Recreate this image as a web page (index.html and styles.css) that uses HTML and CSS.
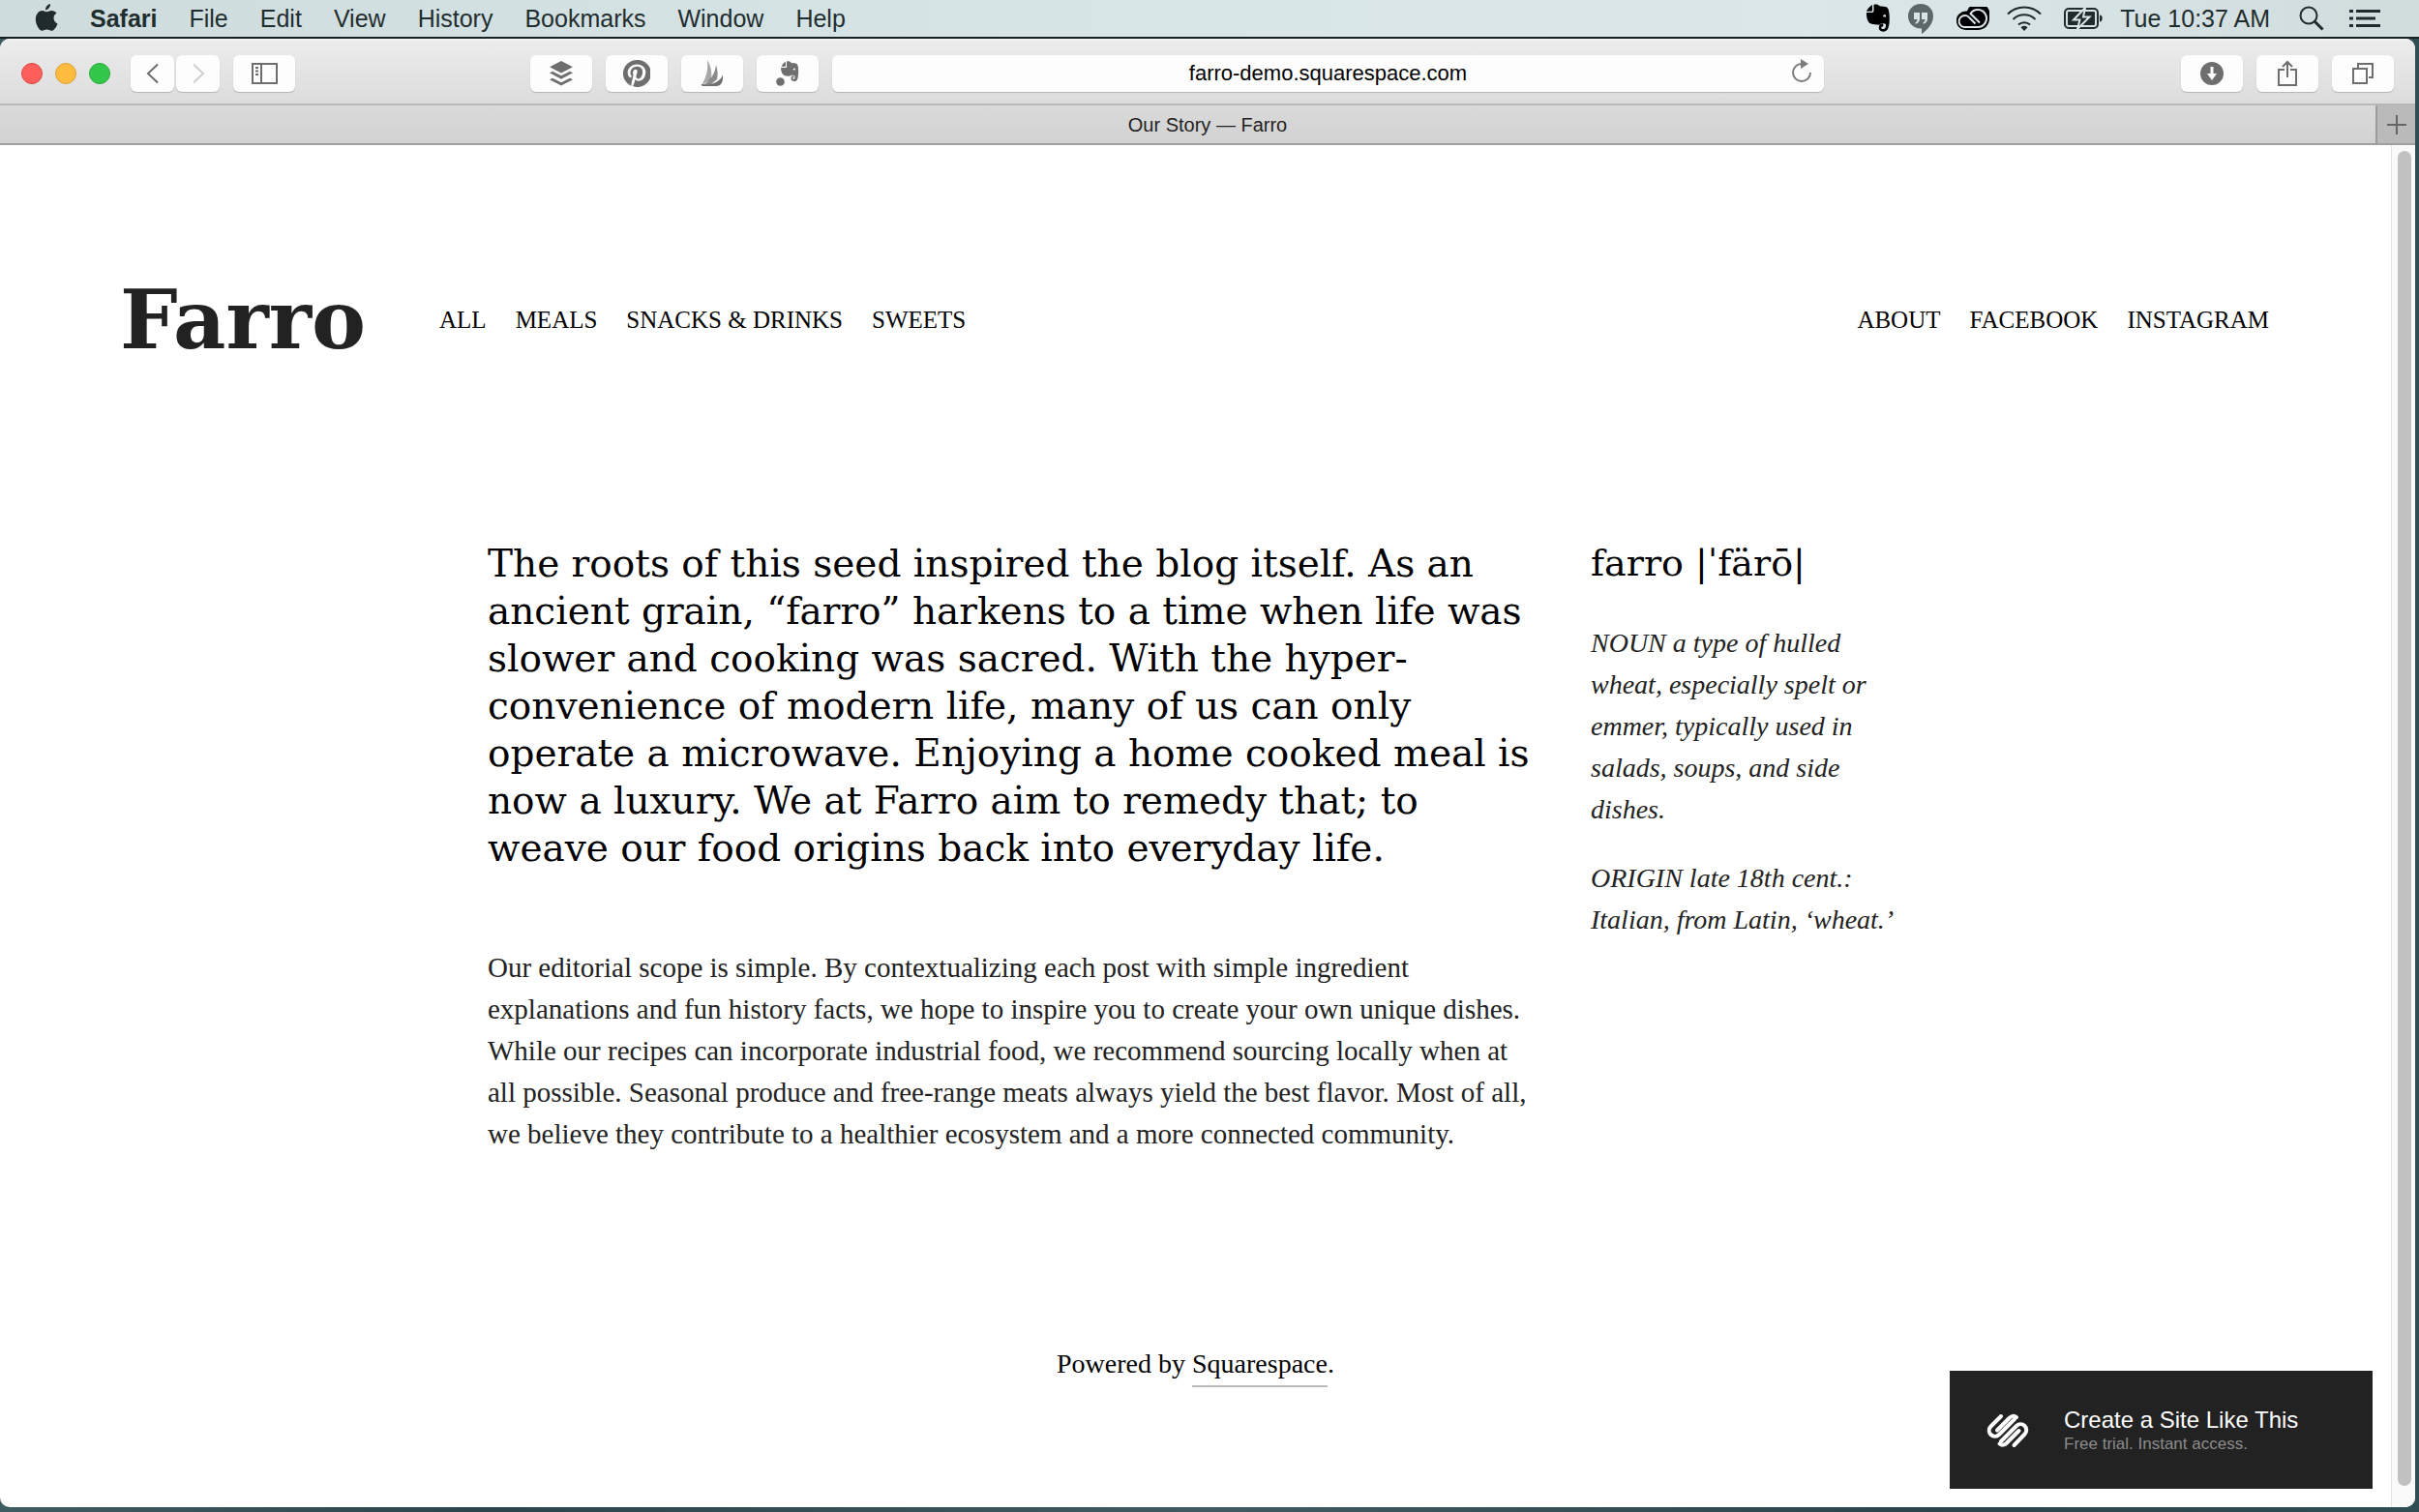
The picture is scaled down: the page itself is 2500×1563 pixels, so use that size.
FILE: index.html
```html
<!DOCTYPE html>
<html lang="en">
<head>
<meta charset="utf-8">
<title>Our Story — Farro</title>
<link rel="stylesheet" href="styles.css">
</head>
<body>
<header class="menubar">
  <nav class="menus" aria-label="Menu bar">
    <button aria-label="Apple" class="apple"><svg width="24" height="30" viewBox="0 0 24 30"><path d="M16 0c.3 3-2.300 6.400-5 6.500C10.700 3.500 13.300.5 16 0zM12.200 8.200c1.300 0 2.700-1.400 5.300-1.300 2 .1 3.900 1.100 5 2.700-4.500 2.800-3.700 9 1 10.800-1 3-3.700 7.400-6.200 7.400-1.900 0-2.700-1.200-4.900-1.200s-3 1.200-4.800 1.200C4.500 27.800.8 21.300.8 15.800c0-5.500 3.500-8.900 7-8.900 2 0 3.300 1.300 4.400 1.300z"/></svg></button>
    <button class="app">Safari</button>
    <button>File</button>
    <button>Edit</button>
    <button>View</button>
    <button>History</button>
    <button>Bookmarks</button>
    <button>Window</button>
    <button>Help</button>
  </nav>
  <div class="status">
    <svg class="black" width="26" height="30" viewBox="0 0 26 30"><path d="M7 1v5.500c0 .8-.4 1.200-1.200 1.200H1C1.500 6 5 2 7 1zM8.500 1c2-.8 5-.3 6 1.300 2.500.4 6 .4 7.500 1.200 2.300 1.200 3 8 2.700 14-.3 6-1.200 10-5 11-3.500.7-6-1-6-4 0-2.500 1.500-4.200 4.500-4v3c-1.300-.2-2 .2-2 1.200 0 1.200 1.200 1.500 2.700 1.300 2-.3 2.200-3 2-5-1-.8-3-.5-5-.7-1 1.400-2 1.500-4.500 1.200C6 21 3.300 20.500 2 16.500 1.200 14 .8 11.500 1 9h5.500C8 9 8.500 8.200 8.500 7z"/><path d="M18 13.500c1-.5 2-.4 3.200.2 0-2-.7-2.700-1.700-2.700-.8 0-1.300 1-1.500 2.500z" fill="#d9e5e7"/></svg>
    <svg class="hangouts" width="26" height="31" viewBox="0 0 26 31"><path fill-rule="evenodd" d="M13 0c7.500 0 13 5.500 13 12.500 0 8-6 14.500-12 18.500v-5.500C6 26 0 20 0 12.700 0 5.500 5.500 0 13 0zM6 9v7h3.500c0 1.500-.5 2.500-2 3.300v1.500c3-.8 4.500-2.600 4.500-5.300V9zm8 0v7h3.500c0 1.500-.5 2.500-2 3.300v1.500c3-.8 4.500-2.600 4.500-5.300V9z"/></svg>
    <svg class="black" width="34" height="24" viewBox="0 0 34 24"><path d="M11 4.500A12 12 0 0 1 34 12c0 7-5 12-12 12H9.500a9.700 9.700 0 0 1 0-19.400z"/><path d="M19.500 17.500L13.500 11.500A6 6 0 1 0 9.500 21H22A9 9 0 1 0 14.500 7L24 16.500" fill="none" stroke="#d9e5e7" stroke-width="2"/></svg>
    <svg class="wifi" width="36" height="26" viewBox="0 0 36 26"><path d="M1 8.500a24 24 0 0 1 34 0M6.500 14a16.500 16.500 0 0 1 23 0M12 19.500a9 9 0 0 1 12 0"/><path d="M14.500 22.300a5 5 0 0 1 7 0L18 26z" class="dot"/></svg>
    <svg class="battery" width="40" height="24" viewBox="0 0 40 24"><rect x="1" y="2" width="34" height="20" rx="4" class="case"/><rect x="4" y="5" width="28" height="14" rx="1"/><path d="M37 8.500c3.600 0 3.600 7 0 7z"/><path class="bolt" d="M22 1L10 13.500h6.500L14 23l12.500-12.500H20z"/></svg>
    <time>Tue 10:37 AM</time>
    <svg class="line" width="26" height="26" viewBox="0 0 26 26"><circle cx="10" cy="10" r="8.500"/><path d="M16 16l8.500 8.500" stroke-width="3"/></svg>
    <svg width="32" height="18" viewBox="0 0 32 18"><path d="M0 0h4v3H0zM7 0h25v3H7zM0 7.500h4v3H0zM7 7.500h20v3H7zM0 15h4v3H0zM7 15h25v3H7z"/></svg>
  </div>
</header>

<div class="window">
  <div class="toolbar">
    <div class="lights"><button class="red" aria-label="Close"></button><button class="yellow" aria-label="Minimize"></button><button class="green" aria-label="Zoom"></button></div>
    <div class="history">
      <button class="tool" aria-label="Back"><svg width="14" height="22" viewBox="0 0 14 22"><path d="M12 1.500L2 11l10 9.500"/></svg></button>
      <button class="tool faint" aria-label="Forward"><svg width="14" height="22" viewBox="0 0 14 22"><path d="M2 1.500L12 11 2 20.500"/></svg></button>
    </div>
    <button class="tool wide" aria-label="Sidebar"><svg width="27" height="22" viewBox="0 0 27 22"><path d="M1 1h25v20H1zM10 1v20"/><path d="M4 5h3M4 8.500h3M4 12h3"/></svg></button>
    <div class="extensions">
      <button class="tool wide solid" aria-label="Buffer"><svg width="26" height="26" viewBox="0 0 26 26"><path d="M13 0l12 6.300L13 12.500 1 6.300zM1 12.300l3-1.500 9 4.500 9-4.500 3 1.500-12 6.400zM1 19.200l3-1.500 9 4.500 9-4.500 3 1.500-12 6.400z"/></svg></button>
      <button class="tool wide solid" aria-label="Pinterest"><svg width="28" height="28" viewBox="0 0 28 28"><path d="M14 0a14 14 0 0 0-5.500 26.900c-.1-1.200 0-2.500.3-3.700l1.800-7.700s-.5-.9-.5-2.200c0-2.100 1.200-3.600 2.700-3.600 1.300 0 1.900.9 1.900 2.100 0 1.300-.8 3.200-1.200 4.900-.4 1.500.7 2.700 2.200 2.700 2.600 0 4.400-3.400 4.400-7.300 0-3-2-5.300-5.800-5.300-4.200 0-6.800 3.100-6.800 6.600 0 1.200.4 2.100.9 2.700.3.300.3.400.2.800l-.3 1.100c-.1.400-.4.500-.7.300-2-.8-2.900-2.900-2.900-5.300 0-3.900 3.300-8.600 9.900-8.600 5.300 0 8.700 3.800 8.700 7.900 0 5.400-3 9.500-7.400 9.500-1.500 0-2.900-.8-3.400-1.700l-.9 3.500c-.4 1.300-1 2.500-1.600 3.500A14 14 0 1 0 14 0z"/></svg></button>
      <button class="tool wide solid" aria-label="Sailboat"><svg width="24" height="28" viewBox="0 0 24 28"><path opacity=".6" d="M7 0c4 7 5 13 4 20L1 26C6 18 8 10 7 0z"/><path opacity=".8" d="M16 5c2 6 2 11 1 15l-6 5-8 1C11 20 15 14 16 5z"/><path d="M23 15.500c.5 6-1 11.500-7 11.500H3c-2.500 0-3-1.700-1.500-2C8 26 19 25 23 15.500z"/></svg></button>
      <button class="tool wide solid" aria-label="Evernote"><svg width="24" height="26" viewBox="0 0 24 26"><circle cx="4.500" cy="21.500" r="4.300"/><path d="M10 .8v4c0 .7-.3 1-1 1H5.500C6 4 8 2 10 .8zM11 .5c2-.6 4 0 4.500 1.500 2 .2 5 .3 6 1 1.800 1.500 1.800 8 1.500 11-.3 4-1 7-3.500 7-2.500.3-4-.8-4-3 0-2 1-3 3-2.800v2c-1 0-1.500.3-1.400.9.1 1 2.400.9 2.400-.9v-1.700c-1-.8-2.500-.2-4-.7-1 1-1.800 1.200-4 .8-3.500-.3-6-1.500-6.500-8.600H10c.8 0 1-.5 1-1.500z"/><path d="M17.500 9.500c.8-.4 1.600-.3 2.500.2 0-1.600-.5-2.200-1.300-2.200-.6 0-1 .8-1.200 2z" fill="#fdfdfd"/></svg></button>
    </div>
    <form class="address">
      <input type="text" value="farro-demo.squarespace.com" aria-label="Address">
      <button class="reload" type="button" aria-label="Reload"><svg width="22" height="26" viewBox="0 0 22 26"><path d="M11 5a9 9 0 1 0 9 9" fill="none" stroke="#7b7b7b" stroke-width="2"/><path d="M10 0l8 5-8 5z" fill="#7b7b7b"/></svg></button>
    </form>
    <div class="actions">
      <button class="tool wide solid" aria-label="Downloads"><svg width="24" height="24" viewBox="0 0 24 24"><path fill-rule="evenodd" d="M12 0a12 12 0 1 0 0 24 12 12 0 0 0 0-24zM10.500 5h3v7H17l-5 7-5-7h3.500z"/></svg></button>
      <button class="tool wide" aria-label="Share"><svg width="20" height="28" viewBox="0 0 20 28"><path d="M7 10H1v16h18V10h-6M10 18V3M5 7l5-5 5 5"/></svg></button>
      <button class="tool wide" aria-label="Tabs"><svg width="22" height="22" viewBox="0 0 22 22"><path d="M1 6h14v15H1zM6 5V1h15v14h-4"/></svg></button>
    </div>
  </div>
  <div class="tabbar">
    <div class="tab">Our Story — Farro</div>
    <button class="newtab" aria-label="New tab"><svg width="20" height="20" viewBox="0 0 20 20"><path d="M10 0v20M0 10h20"/></svg></button>
  </div>
  <div class="viewport">
    <div class="page">
      <header class="site-header">
        <a class="logo" href="#">Farro</a>
        <nav class="links"><a href="#">ALL</a><a href="#">MEALS</a><a href="#">SNACKS &amp; DRINKS</a><a href="#">SWEETS</a></nav>
        <nav class="links end"><a href="#">ABOUT</a><a href="#">FACEBOOK</a><a href="#">INSTAGRAM</a></nav>
      </header>
      <main class="story">
        <article>
          <h1>The roots of this seed inspired the blog itself. As an<br>ancient grain, “farro” harkens to a time when life was<br>slower and cooking was sacred. With the hyper-<br>convenience of modern life, many of us can only<br>operate a microwave. Enjoying a home cooked meal is<br>now a luxury. We at Farro aim to remedy that; to<br>weave our food origins back into everyday life.</h1>
          <p>Our editorial scope is simple. By contextualizing each post with simple ingredient<br>explanations and fun history facts, we hope to inspire you to create your own unique dishes.<br>While our recipes can incorporate industrial food, we recommend sourcing locally when at<br>all possible. Seasonal produce and free-range meats always yield the best flavor. Most of all,<br>we believe they contribute to a healthier ecosystem and a more connected community.</p>
        </article>
        <aside>
          <h2>farro |ˈfärō|</h2>
          <p>NOUN a type of hulled<br>wheat, especially spelt or<br>emmer, typically used in<br>salads, soups, and side<br>dishes.</p>
          <p>ORIGIN late 18th cent.:<br>Italian, from Latin, ‘wheat.’</p>
        </aside>
      </main>
      <footer class="powered">Powered by <a href="#">Squarespace</a>.</footer>
      <a class="promo" href="#">
        <svg width="44" height="36" viewBox="0 0 44 36"><g fill="none" stroke="#fff" stroke-width="4" stroke-linecap="round" stroke-linejoin="round"><path d="M15 3L4.500 13.500a6 6 0 0 0 8.500 8.500L29 6"/><path d="M11 17.500L23.500 5c2-2.500 5-2.800 7.500-1"/><path d="M15 29L31 13a6 6 0 0 1 8.500 8.500L28.500 33"/><path d="M33.500 18L21 30.500c-2 2.500-5 2.800-7.500 1"/></g></svg>
        <span><strong>Create a Site Like This</strong><small>Free trial. Instant access.</small></span>
      </a>
    </div>
    <div class="scrollbar"><div class="thumb"></div></div>
  </div>
</div>
</body>
</html>
```
FILE: styles.css
```css
* { box-sizing: border-box; }
body {
  margin: 0;
  height: 100vh;
  display: flex;
  flex-direction: column;
  overflow: hidden;
  background: linear-gradient(90deg, #3f5c61, #2c444b 20%, #3f5a60 50%, #2b444b 80%, #2f4d53);
  font-family: "Liberation Sans", Arial, sans-serif;
  color: #000;
}
button { border: 0; padding: 0; background: none; font: inherit; color: inherit; }
a { color: inherit; text-decoration: none; }
svg { display: block; flex: none; }

.menubar {
  flex: none;
  height: 40px;
  display: flex;
  align-items: center;
  justify-content: space-between;
  padding: 0 40px 0 36px;
  border-bottom: 2px solid #16211f;
  background: linear-gradient(90deg, #cfdcde, #d9e6e8 50%, #dbe7e9 75%, #d1dcdd);
  color: #1f2d2e;
  font-size: 25px;
  line-height: 38px;
}
.menus { display: flex; gap: 33px; }
.menus .apple { display: flex; align-items: center; }
.menus .app { font-weight: bold; }
.menubar svg { fill: #1f2b2d; }
.menubar .black { fill: #000; }
.status { display: flex; align-items: center; gap: 18px; }
.status .hangouts { margin-right: 6px; fill: #5c686a; }
.status .wifi, .status .line { fill: none; stroke: #1f2b2d; stroke-width: 2; }
.status .wifi { margin-right: 5px; }
.status .wifi .dot { fill: #1f2b2d; stroke: none; }
.status .line { margin: 0 8px 0 12px; }
.status .battery .case { fill: none; stroke: #1f2b2d; stroke-width: 2; }
.status .battery .bolt { stroke: #d9e5e7; stroke-width: 2; }

.window {
  flex: 1;
  min-height: 0;
  margin: 0 4px 5px 0;
  display: flex;
  flex-direction: column;
  border-radius: 10px;
  overflow: hidden;
  background: #fff;
}
.toolbar {
  flex: none;
  height: 69px;
  display: flex;
  align-items: center;
  padding: 2px 22px 0 22px;
  border-top: 2px solid #f3f3f3;
  border-bottom: 2px solid #b8b8b8;
  background: linear-gradient(#ececec, #dcdcdc);
}
.lights { display: flex; gap: 13px; margin-right: 21px; }
.lights button { width: 22px; height: 22px; border-radius: 50%; border: 1px solid #e0443e; background: #ff5f5a; }
.lights .yellow { background: #fdbc40; border-color: #dfa033; }
.lights .green { background: #34c84a; border-color: #2aaa38; }
.history { display: flex; gap: 2px; margin-right: 14px; }
.tool {
  width: 45px;
  height: 38px;
  display: flex;
  align-items: center;
  justify-content: center;
  border-radius: 6px;
  background: #fdfdfd;
  box-shadow: 0 1px 1px #b4b4b4;
}
.tool svg { fill: none; stroke: #6e6e6e; stroke-width: 2; }
.tool.faint svg { stroke: #cfcfcf; }
.tool.solid svg { fill: #6e6e6e; stroke: none; }
.tool.wide { width: 64px; }
.extensions { display: flex; gap: 14px; margin-left: 243px; }
.address { flex: 1; position: relative; margin: 0 369px 0 14px; }
.address input {
  display: block;
  width: 100%;
  height: 38px;
  border: 0;
  border-radius: 6px;
  background: #fdfdfd;
  box-shadow: 0 1px 1px #b4b4b4;
  text-align: center;
  font: 22px "Liberation Sans", Arial, sans-serif;
  color: #000;
}
.reload { position: absolute; right: 12px; top: 4px; }
.actions { display: flex; gap: 14px; }
.tabbar {
  flex: none;
  height: 41px;
  display: flex;
  border-bottom: 2px solid #a0a0a0;
  background: linear-gradient(#dadada, #d2d2d2);
}
.tab { flex: 1; padding-left: 41px; text-align: center; font-size: 20px; line-height: 40px; color: #222; }
.newtab {
  width: 41px;
  display: flex;
  align-items: center;
  justify-content: center;
  border-left: 2px solid #9c9c9c;
  background: #bababa;
}
.newtab svg { stroke: #666; stroke-width: 2; }

.viewport { flex: 1; min-height: 0; display: flex; }
.page { flex: 1; position: relative; font-family: "Liberation Serif", "Times New Roman", serif; }
.scrollbar { flex: none; width: 25px; padding: 6px 4px 22px 6px; border-left: 1px solid #e4e4e4; background: #fafafa; }
.thumb { height: 100%; border-radius: 7px; background: #c1c1c1; }

.site-header { display: flex; align-items: center; padding: 130px 126px 0 124px; height: 232px; }
.logo { font: bold 84px/100px "DejaVu Serif", serif; color: #222; }
.links { display: flex; gap: 30px; margin-left: 76px; font-size: 25px; line-height: 32px; }
.links.end { margin-left: auto; }

.story { display: flex; gap: 66px; padding: 176px 0 0 504px; }
.story article { width: 1074px; }
h1, h2 { margin: 0; font: 39px/49px "DejaVu Serif", serif; white-space: nowrap; }
h2 { margin-bottom: 36px; font-size: 38px; }
.story p { margin: 0; font-size: 29px; line-height: 43px; color: #222; white-space: nowrap; }
.story article p { margin-top: 78px; }
.story aside p { font-size: 28px; font-style: italic; }
.story aside p + p { margin-top: 28px; }
.powered { margin-top: 194px; text-align: center; font-size: 28px; line-height: 44px; }
.powered a { display: inline-block; border-bottom: 2px solid #bbb; }

.promo {
  position: absolute;
  right: 19px;
  bottom: 19px;
  width: 437px;
  height: 122px;
  display: flex;
  align-items: center;
  gap: 36px;
  padding: 2px 0 0 38px;
  background: #222;
  color: #fff;
  font-family: "Liberation Sans", Arial, sans-serif;
}
.promo strong { display: block; font-size: 24px; line-height: 28px; font-weight: normal; }
.promo small { display: block; font-size: 17px; line-height: 22px; color: #8c8c8c; }
```
